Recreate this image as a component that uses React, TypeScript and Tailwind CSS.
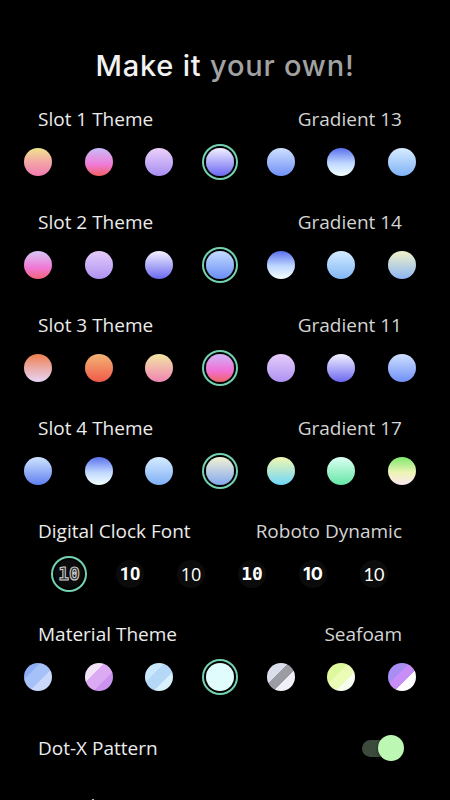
import React from 'react';

type Swatch = { cls: string };

const slotRows: { label: string; value: string; selected: number; swatches: string[] }[] = [
  {
    label: 'Slot 1 Theme',
    value: 'Gradient 13',
    selected: 3,
    swatches: [
      'bg-[linear-gradient(180deg,#efe48c_0%,#f3a6a6_50%,#f07ab0_100%)]',
      'bg-[linear-gradient(180deg,#c9bcf8_0%,#f07ad6_60%,#f06060_100%)]',
      'bg-[linear-gradient(180deg,#ecd0fa_0%,#a68ef2_100%)]',
      'bg-[linear-gradient(180deg,#f2f0ff_0%,#6c66f2_100%)]',
      'bg-[linear-gradient(180deg,#cfe0ff_0%,#7090f6_100%)]',
      'bg-[linear-gradient(180deg,#5a70ee_0%,#c0d8ff_55%,#f4ffff_100%)]',
      'bg-[linear-gradient(180deg,#d8ecff_0%,#7fb2f6_100%)]',
    ],
  },
  {
    label: 'Slot 2 Theme',
    value: 'Gradient 14',
    selected: 3,
    swatches: [
      'bg-[linear-gradient(180deg,#d6c8f8_0%,#f078d4_60%,#f06478_100%)]',
      'bg-[linear-gradient(180deg,#e4ccfa_0%,#ae92f2_100%)]',
      'bg-[linear-gradient(180deg,#f4f2ff_0%,#6c68f0_100%)]',
      'bg-[linear-gradient(180deg,#c4dcff_0%,#6a8ef6_100%)]',
      'bg-[linear-gradient(180deg,#5a70ee_0%,#c0d8ff_55%,#f4ffff_100%)]',
      'bg-[linear-gradient(180deg,#d4ecff_0%,#82b6f6_100%)]',
      'bg-[linear-gradient(180deg,#f2f2c8_0%,#8cb6f2_100%)]',
    ],
  },
  {
    label: 'Slot 3 Theme',
    value: 'Gradient 11',
    selected: 3,
    swatches: [
      'bg-[linear-gradient(180deg,#ee7e4e_0%,#eab0b0_55%,#e8d4f4_100%)]',
      'bg-[linear-gradient(180deg,#f2b476_0%,#f05a4a_100%)]',
      'bg-[linear-gradient(180deg,#f2e6a2_0%,#f084b4_100%)]',
      'bg-[linear-gradient(180deg,#d0b4f8_0%,#f070d4_60%,#f06464_100%)]',
      'bg-[linear-gradient(180deg,#e6ccfa_0%,#ae92f2_100%)]',
      'bg-[linear-gradient(180deg,#f4f2ff_0%,#6c68f0_100%)]',
      'bg-[linear-gradient(180deg,#cfe0ff_0%,#7090f6_100%)]',
    ],
  },
  {
    label: 'Slot 4 Theme',
    value: 'Gradient 17',
    selected: 3,
    swatches: [
      'bg-[linear-gradient(180deg,#cfe4ff_0%,#6080f0_100%)]',
      'bg-[linear-gradient(180deg,#5a70ee_0%,#c0d8ff_55%,#f4ffff_100%)]',
      'bg-[linear-gradient(180deg,#d6ecff_0%,#80b0f6_100%)]',
      'bg-[linear-gradient(180deg,#f2f2d4_0%,#84a8f0_100%)]',
      'bg-[linear-gradient(180deg,#f2f8b0_0%,#70d6f8_100%)]',
      'bg-[linear-gradient(180deg,#dcfff4_0%,#64e6a4_100%)]',
      'bg-[linear-gradient(180deg,#7ee86e_0%,#eef4b4_55%,#fae8f2_100%)]',
    ],
  },
];

const materialSwatches: Swatch[] = [
  { cls: 'bg-[linear-gradient(135deg,#8eaef6_0%,#8eaef6_30%,#a6c0f8_30%,#a6c0f8_60%,#cad8fc_60%,#cad8fc_100%)]' },
  { cls: 'bg-[linear-gradient(135deg,#f2e2f8_0%,#f2e2f8_35%,#dcaaf2_35%,#dcaaf2_65%,#cc92f0_65%,#cc92f0_100%)]' },
  { cls: 'bg-[linear-gradient(135deg,#cae8fc_0%,#cae8fc_35%,#b6d8f8_35%,#b6d8f8_65%,#d8f0fc_65%,#d8f0fc_100%)]' },
  { cls: 'bg-[#e0fcfc]' },
  { cls: 'bg-[linear-gradient(135deg,#dadeea_0%,#dadeea_38%,#9c9ca4_38%,#9c9ca4_62%,#f0f0f8_62%,#f0f0f8_100%)]' },
  { cls: 'bg-[linear-gradient(135deg,#def89c_0%,#def89c_38%,#eafcb6_38%,#eafcb6_65%,#f8fff0_65%,#f8fff0_100%)]' },
  { cls: 'bg-[linear-gradient(135deg,#a88ef2_0%,#a88ef2_38%,#c88ef8_38%,#c88ef8_62%,#ffffff_62%,#ffffff_100%)]' },
];

const clockFonts = [
  "font-['DejaVu_Sans_Mono',monospace] font-bold text-[#2a2a2a] [-webkit-text-stroke:1px_#d0d0d0]",
  "font-['Roboto',sans-serif] font-bold text-white",
  "font-['Open_Sans',sans-serif] font-normal text-white",
  "font-['DejaVu_Sans_Mono',monospace] font-bold text-white",
  "font-['Inter',sans-serif] font-bold text-white",
  "font-['Lato',sans-serif] font-normal text-white",
];

const SectionHeader: React.FC<{ label: string; value: string }> = ({ label, value }) => (
  <div className="flex h-6 items-center justify-between pl-[38px] pr-[48px] text-[19px] leading-6">
    <span className="text-[#ececec]">{label}</span>
    <span className="text-[#d4d4d4]">{value}</span>
  </div>
);

const Dot: React.FC<{ cls: string; active?: boolean }> = ({ cls, active }) => (
  <div
    className={
      'h-7 w-7 rounded-full ' +
      cls +
      (active ? ' ring-2 ring-[#74d2b2] ring-offset-2 ring-offset-black' : '')
    }
  />
);

export default function App() {
  return (
    <div className="min-h-[800px] w-[450px] overflow-hidden bg-black font-['Open_Sans',sans-serif]">
      <h1 className="pt-[46px] text-center font-['Inter',sans-serif] text-[29px] font-medium leading-10 tracking-[0.8px]">
        <span className="text-[#f2f2f2]">Make it </span>
        <span className="text-[#a2a2a2]">your own!</span>
      </h1>

      <div className="mt-[21px] flex flex-col gap-[34px]">
        {slotRows.map((row) => (
          <section key={row.label} className="flex flex-col gap-[17px]">
            <SectionHeader label={row.label} value={row.value} />
            <div className="flex items-center justify-between pl-6 pr-[34px]">
              {row.swatches.map((s, i) => (
                <Dot key={i} cls={s} active={i === row.selected} />
              ))}
            </div>
          </section>
        ))}

        <section className="flex flex-col gap-[17px]">
          <SectionHeader label="Digital Clock Font" value="Roboto Dynamic" />
          <div className="flex items-center justify-between pl-[55px] pr-[62px]">
            {clockFonts.map((f, i) => (
              <div
                key={i}
                className={
                  'flex h-7 w-7 items-center justify-center rounded-full bg-[#0b0b0b] ' +
                  (i === 0 ? 'ring-2 ring-[#74d2b2] ring-offset-2 ring-offset-black' : '')
                }
              >
                <span className={'text-[18px] leading-none ' + f}>10</span>
              </div>
            ))}
          </div>
        </section>

        <section className="flex flex-col gap-[17px]">
          <SectionHeader label="Material Theme" value="Seafoam" />
          <div className="flex items-center justify-between pl-6 pr-[34px]">
            {materialSwatches.map((s, i) => (
              <Dot key={i} cls={s.cls} active={i === 3} />
            ))}
          </div>
        </section>
      </div>

      <div className="mt-[45px] flex h-6 items-center justify-between pl-[38px] pr-[48px]">
        <span className="text-[19px] leading-6 text-[#ececec]">Dot-X Pattern</span>
        <div className="relative flex h-7 w-10 items-center">
          <div className="h-[17px] w-10 rounded-full bg-[#3c4a3e]" />
          <div className="absolute right-[-2px] top-[1px] h-[26px] w-[26px] rounded-full bg-[#bcf8b4] shadow-[0_1px_3px_rgba(0,0,0,0.6)]" />
        </div>
      </div>

      <div className="mt-[34px] pl-[38px] text-[19px] leading-6 text-[#e6e6e6]">Complications</div>
    </div>
  );
}
